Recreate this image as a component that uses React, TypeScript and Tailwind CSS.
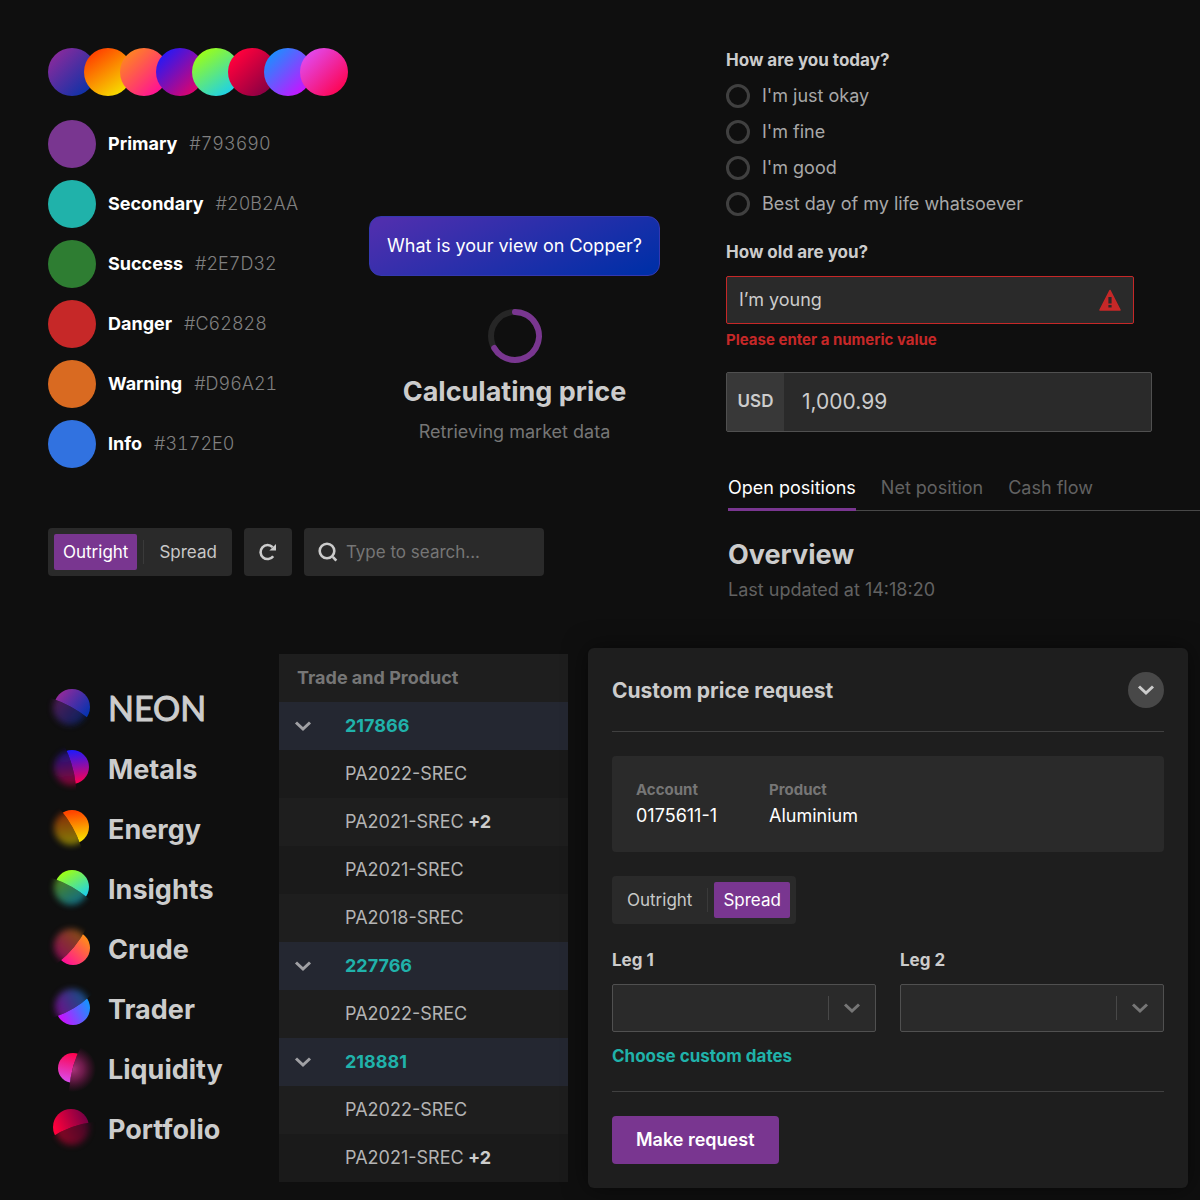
import { useState } from "react";

interface Brand {
  id: string;
  label: string;
  from: string;
  to: string;
  // gradient direction, x1 y1 x2 y2 in the 48px box
  dir: [number, number, number, number];
  cx: number;
  cy: number;
  r: number;
  softX: number;
  softY: number;
  sharp: string;
  soft: string;
}

const gradients = [
  "bg-linear-[135deg,#8f2a9c_8%,#0033a8_95%]",
  "bg-linear-[145deg,#ff4500_15%,#f5ee00_95%]",
  "bg-linear-[135deg,#ff8c1a_8%,#ff0a9c_90%]",
  "bg-linear-[135deg,#1a1aff_8%,#f5005a_95%]",
  "bg-linear-[145deg,#a0ff10_10%,#10ccff_95%]",
  "bg-linear-[135deg,#ff003c_15%,#7a0044_95%]",
  "bg-linear-[135deg,#1a90ff_12%,#cc10ff_88%]",
  "bg-linear-[135deg,#e14af0_12%,#ff0048_92%]",
];

const palette = [
  { name: "Primary", hex: "#793690", color: "bg-[#793690]" },
  { name: "Secondary", hex: "#20B2AA", color: "bg-[#20b2aa]" },
  { name: "Success", hex: "#2E7D32", color: "bg-[#2e7d32]" },
  { name: "Danger", hex: "#C62828", color: "bg-[#c62828]" },
  { name: "Warning", hex: "#D96A21", color: "bg-[#d96a21]" },
  { name: "Info", hex: "#3172E0", color: "bg-[#3172e0]" },
];

const moods = ["I'm just okay", "I'm fine", "I'm good", "Best day of my life whatsoever"];

const tabs = ["Open positions", "Net position", "Cash flow"];

const brands: Brand[] = [
  {
    id: "neon", label: "NEON", from: "#8f2a9c", to: "#0033b0", dir: [12, 10, 40, 32],
    cx: 24, cy: 23, r: 18, softX: 22, softY: 24,
    sharp: "M-20 6 L3 14 Q23 21 40 34 L60 48 V-20 H-20Z",
    soft: "M-20 6 L3 14 Q23 21 40 34 L60 48 V70 H-20Z",
  },
  {
    id: "metals", label: "Metals", from: "#1a1aff", to: "#ff0050", dir: [22, 6, 26, 40],
    cx: 24, cy: 23, r: 17, softX: 23, softY: 24,
    sharp: "M12 -10 L17 3 Q26 22 28 42 L29 60 H70 V-10Z",
    soft: "M12 -10 L17 3 Q26 22 28 42 L29 60 H-20 V-10Z",
  },
  {
    id: "energy", label: "Energy", from: "#ff4500", to: "#f7f000", dir: [24, 8, 28, 40],
    cx: 24, cy: 23, r: 17, softX: 23, softY: 24,
    sharp: "M4 -10 L12 5 Q26 22 33 42 L38 60 H70 V-10Z",
    soft: "M4 -10 L12 5 Q26 22 33 42 L38 60 H-20 V-10Z",
  },
  {
    id: "insights", label: "Insights", from: "#a0ff10", to: "#10ccff", dir: [18, 6, 36, 36],
    cx: 24, cy: 23, r: 17, softX: 23, softY: 24,
    sharp: "M-20 5 L4 14 Q24 21 40 34 L60 52 V-20 H-20Z",
    soft: "M-20 5 L4 14 Q24 21 40 34 L60 52 V70 H-20Z",
  },
  {
    id: "crude", label: "Crude", from: "#ff8c1a", to: "#ff0a9c", dir: [38, 14, 14, 38],
    cx: 25, cy: 24, r: 17, softX: 23, softY: 22,
    sharp: "M46 -14 L38 5 Q28 24 11 38 L-10 55 V70 H70 V-14Z",
    soft: "M46 -14 L38 5 Q28 24 11 38 L-10 55 V-14Z",
  },
  {
    id: "trader", label: "Trader", from: "#1a90ff", to: "#cc10ff", dir: [40, 20, 12, 34],
    cx: 25, cy: 24, r: 17, softX: 24, softY: 22,
    sharp: "M60 -4 L42 12 Q27 26 7 33 L-20 40 V70 H70Z",
    soft: "M60 -4 L42 12 Q27 26 7 33 L-20 40 V-20 H60Z",
  },
  {
    id: "liquidity", label: "Liquidity", from: "#ff0048", to: "#d850f5", dir: [28, 9, 21, 40],
    cx: 25, cy: 24, r: 15, softX: 27, softY: 24,
    sharp: "M42 -14 L34 1 Q23 20 21 47 V70 H-20 V-14Z",
    soft: "M42 -14 L34 1 Q23 20 21 47 V70 H70 V-14Z",
  },
  {
    id: "portfolio", label: "Portfolio", from: "#ff003c", to: "#7a0044", dir: [8, 27, 38, 14],
    cx: 23, cy: 23, r: 18, softX: 24, softY: 24,
    sharp: "M-20 46 L4 33 Q22 21 45 18 L70 16 V-20 H-20Z",
    soft: "M-20 46 L4 33 Q22 21 45 18 L70 16 V70 H-20Z",
  },
];

interface TradeRow {
  label: string;
  extra?: string;
  group?: boolean;
}

const trades: TradeRow[] = [
  { label: "217866", group: true },
  { label: "PA2022-SREC" },
  { label: "PA2021-SREC", extra: "+2" },
  { label: "PA2021-SREC" },
  { label: "PA2018-SREC" },
  { label: "227766", group: true },
  { label: "PA2022-SREC" },
  { label: "218881", group: true },
  { label: "PA2022-SREC" },
  { label: "PA2021-SREC", extra: "+2" },
];

function Chevron({ className = "" }: { className?: string }) {
  return (
    <svg viewBox="0 0 18 12" fill="none" className={`h-3 w-[18px] ${className}`} aria-hidden="true">
      <path d="M2 2.5 L9 9 L16 2.5" stroke="currentColor" strokeWidth="3" />
    </svg>
  );
}

function BrandIcon({ brand }: { brand: Brand }) {
  const [x1, y1, x2, y2] = brand.dir;
  return (
    <svg viewBox="0 0 48 48" className="size-12 shrink-0 overflow-visible" aria-hidden="true">
      <defs>
        <linearGradient id={`${brand.id}-fill`} gradientUnits="userSpaceOnUse" x1={x1} y1={y1} x2={x2} y2={y2}>
          <stop stopColor={brand.from} />
          <stop offset="1" stopColor={brand.to} />
        </linearGradient>
        {/* the glow of the liquidity mark fades outwards from its cut edge */}
        <radialGradient id={`${brand.id}-glow`} gradientUnits="userSpaceOnUse" cx="25" cy="25" r="23">
          <stop stopColor="#e040a0" stopOpacity="1.4" />
          <stop offset="0.45" stopColor="#c02880" stopOpacity="0.7" />
          <stop offset="1" stopColor="#a01060" stopOpacity="0" />
        </radialGradient>
        <clipPath id={`${brand.id}-sharp`}>
          <path d={brand.sharp} />
        </clipPath>
        <clipPath id={`${brand.id}-soft`}>
          <path d={brand.soft} />
        </clipPath>
        <filter id={`${brand.id}-blur`} x="-50%" y="-50%" width="200%" height="200%">
          <feGaussianBlur stdDeviation="3" />
        </filter>
      </defs>
      {brand.id === "liquidity" ? (
        <g clipPath={`url(#${brand.id}-soft)`} opacity="0.75">
          <circle cx="25" cy="25" r="23" fill={`url(#${brand.id}-glow)`} />
        </g>
      ) : (
        <g clipPath={`url(#${brand.id}-soft)`} opacity="0.5">
          <circle cx={brand.softX} cy={brand.softY} r="17" fill={`url(#${brand.id}-fill)`} filter={`url(#${brand.id}-blur)`} />
        </g>
      )}
      <g clipPath={`url(#${brand.id}-sharp)`}>
        <circle cx={brand.cx} cy={brand.cy} r={brand.r} fill={`url(#${brand.id}-fill)`} />
      </g>
    </svg>
  );
}

function Segmented({ initial }: { initial: string }) {
  const [value, setValue] = useState(initial);
  const item = (name: string) => (
    <button
      type="button"
      onClick={() => setValue(name)}
      className={`h-9 rounded-xs px-[9px] pt-px ${value === name ? "bg-[#793690] text-white" : "text-[#c8c8c8]"}`}
    >
      {name}
    </button>
  );
  return (
    <div className="flex h-12 w-fit items-center gap-1.5 rounded bg-[#2a2a2a] p-1.5 text-[17px]">
      {item("Outright")}
      <span className="h-6 w-px bg-[#3a3a3a]" />
      {item("Spread")}
    </div>
  );
}

function LegSelect({ id, label }: { id: string; label: string }) {
  return (
    <div className="flex-1">
      <label htmlFor={id} className="block text-[17px] leading-6 font-bold">
        {label}
      </label>
      <div className="relative mt-3">
        <select id={id} className="block h-12 w-full appearance-none rounded-xs border border-[#505050] bg-[#2a2a2a] px-3" />
        <span className="pointer-events-none absolute inset-y-0 right-0 flex items-center gap-3.5 pr-[15px] text-[#767676]">
          <span className="h-6 w-px bg-[#484848]" />
          <Chevron />
        </span>
      </div>
    </div>
  );
}

export default function App() {
  const [tab, setTab] = useState("Open positions");

  return (
    <div className="min-h-screen bg-[#0f0f0f] pb-3 font-['Inter',sans-serif] text-[#cccccc]">
      <div className="flex h-[648px] pt-12">
        <div className="w-[726px] shrink-0 pl-12">
          <div className="flex">
            {gradients.map((gradient) => (
              <span key={gradient} className={`-mr-3 size-12 rounded-full ${gradient}`} />
            ))}
          </div>

          <div className="mt-6 flex">
            <ul className="w-[321px] space-y-3">
              {palette.map((color) => (
                <li key={color.name} className="flex items-center gap-3 text-lg">
                  <span className={`size-12 rounded-full ${color.color}`} />
                  <span className="font-bold text-white">{color.name}</span>
                  <span className="font-light text-[#808080] tabular-nums">{color.hex}</span>
                </li>
              ))}
            </ul>

            <div className="flex w-[291px] flex-col items-center pt-24">
              <button
                type="button"
                className="h-15 w-full rounded-xl border border-[#3438b0] bg-linear-[155deg,#4f2fae_5%,#002fa7_95%] text-lg text-white"
              >
                What is your view on Copper?
              </button>
              <svg viewBox="0 0 54 54" fill="none" className="mt-[33px] size-[54px]" aria-hidden="true">
                <circle cx="27" cy="27" r="24" stroke="#262626" strokeWidth="6" />
                <path d="M27 3 A24 24 0 1 1 6.2 39" stroke="#793690" strokeWidth="6" strokeLinecap="round" />
              </svg>
              <h2 className="mt-[13px] text-[27px] leading-8 font-bold">Calculating price</h2>
              <p className="mt-3 text-lg leading-6 text-[#767676]">Retrieving market data</p>
            </div>
          </div>

          <div className="mt-15 flex gap-3">
            <Segmented initial="Outright" />
            <button type="button" aria-label="Refresh" className="flex size-12 items-center justify-center rounded bg-[#2a2a2a]">
              <svg viewBox="0 0 18 18" fill="none" className="size-[18px]" aria-hidden="true">
                <path d="M14.2 13.2 A7 7 0 1 1 13.6 4.2" stroke="#cccccc" strokeWidth="2.6" />
                <path d="M17 1 V7.6 H10.4Z" fill="#cccccc" />
              </svg>
            </button>
            <div className="flex h-12 w-60 items-center gap-2 rounded bg-[#2a2a2a] px-3.5">
              <svg viewBox="0 0 20 20" fill="none" className="size-5 shrink-0" aria-hidden="true">
                <circle cx="9" cy="9" r="7.3" stroke="#cccccc" strokeWidth="2.6" />
                <path d="M14.8 14.8 L18.3 18.6" stroke="#cccccc" strokeWidth="2.6" />
              </svg>
              <input
                type="search"
                aria-label="Search"
                placeholder="Type to search..."
                className="w-full min-w-0 bg-transparent pt-px text-[17px] outline-none placeholder:text-[#767676]"
              />
            </div>
          </div>
        </div>

        <div className="min-w-0 flex-1">
          <fieldset>
            <legend className="text-[17px] leading-6 font-bold">How are you today?</legend>
            <div className="mt-3 space-y-3">
              {moods.map((mood) => (
                <label key={mood} className="flex items-center gap-3 text-lg leading-6 text-[#a8a8a8]">
                  <input
                    type="radio"
                    name="mood"
                    className="size-6 appearance-none rounded-full border-3 border-[#404040] checked:border-[#793690]"
                  />
                  {mood}
                </label>
              ))}
            </div>
          </fieldset>

          <div className="mt-6 mr-[66px]">
            <label htmlFor="age" className="block text-[17px] leading-6 font-bold">
              How old are you?
            </label>
            <div className="mt-3 flex h-12 items-center rounded-xs border border-[#c62828] bg-[#2a2a2a] px-3">
              <input id="age" defaultValue="I’m young" className="min-w-0 flex-1 bg-transparent text-lg outline-none" />
              <svg viewBox="0 0 22 22" className="size-[22px]" aria-hidden="true">
                <path d="M11 1.5 L21 21 H1Z" fill="#c62828" stroke="#c62828" strokeWidth="1.6" strokeLinejoin="round" />
                <path d="M9.4 8 H12.6 V14.5 H9.4Z M9.4 16 H12.6 V18.6 H9.4Z" fill="#2a2a2a" />
              </svg>
            </div>
            <p className="mt-1 text-[15px] leading-6 font-bold text-[#c62828]">Please enter a numeric value</p>
          </div>

          <div className="mt-5 mr-12 flex h-15 rounded-xs border border-[#505050] bg-[#2a2a2a]">
            <label htmlFor="amount" className="flex w-[57px] items-center justify-center bg-[#383838] text-[17px] font-semibold">
              USD
            </label>
            <input id="amount" defaultValue="1,000.99" className="min-w-0 flex-1 bg-transparent px-[18px] text-[21px] outline-none" />
          </div>

          <div className="pl-0.5">
            <div role="tablist" className="mt-[35px] flex gap-[25px] border-b border-[#484848]">
              {tabs.map((name) => (
                <button
                  key={name}
                  type="button"
                  role="tab"
                  aria-selected={tab === name}
                  onClick={() => setTab(name)}
                  className={`-mb-px h-11 border-b-3 text-lg leading-6 ${
                    tab === name ? "border-[#793690] text-white" : "border-transparent text-[#626262]"
                  }`}
                >
                  {name}
                </button>
              ))}
            </div>
            <h2 className="mt-7 text-[27px] leading-8 font-bold">Overview</h2>
            <p className="mt-[7px] text-lg leading-6 text-[#626262]">Last updated at 14:18:20</p>
          </div>
        </div>
      </div>

      <div className="flex">
        <ul className="w-[279px] shrink-0 space-y-3 pt-9 pl-12">
          {brands.map((brand) => (
            <li key={brand.id} className="flex h-12 items-center gap-3">
              <BrandIcon brand={brand} />
              {brand.id === "neon" ? (
                <span className="font-['Lato',sans-serif] text-[34px] leading-8 [-webkit-text-stroke:1px]">{brand.label}</span>
              ) : (
                <span className="pt-[3px] text-[27px] leading-8 font-bold">{brand.label}</span>
              )}
            </li>
          ))}
        </ul>

        <table className="mt-1.5 w-[289px] shrink-0 self-start text-left text-lg leading-6">
          <thead>
            <tr className="h-12 bg-[#1e1e1e]">
              <th colSpan={2} className="pl-[18px] font-bold text-[#767676]">
                Trade and Product
              </th>
            </tr>
          </thead>
          <tbody>
            {trades.map((row, i) => (
              <tr key={i} className={`h-12 ${row.group ? "bg-[#242731]" : i % 2 ? "bg-[#1a1a1a]" : "bg-[#1e1e1e]"}`}>
                <td className="w-[66px] pl-[15px] text-[#a0a0a4]">{row.group && <Chevron />}</td>
                <td className={row.group ? "font-bold text-[#20b2aa]" : "text-[#b4b4b4]"}>
                  {row.label}
                  {row.extra && <b className="font-bold text-[#cccccc]"> {row.extra}</b>}
                </td>
              </tr>
            ))}
          </tbody>
        </table>

        <section className="mr-3 ml-5 min-w-0 flex-1 rounded-md bg-[#1e1e1e] p-6 shadow-[0_0_24px_rgba(0,0,0,0.5)]">
          <div className="flex items-center justify-between border-b border-[#404040] pb-[23px]">
            <h2 className="pt-0.5 text-[21px] leading-6 font-bold">Custom price request</h2>
            <button type="button" aria-label="Collapse" className="flex size-9 items-center justify-center rounded-full bg-[#484848]">
              <Chevron />
            </button>
          </div>

          <dl className="mt-6 flex gap-[52px] rounded bg-[#2a2a2a] px-6 py-[22px]">
            <div>
              <dt className="text-[15px] leading-6 font-bold text-[#767676]">Account</dt>
              <dd className="text-lg leading-7 text-white">0175611-1</dd>
            </div>
            <div>
              <dt className="text-[15px] leading-6 font-bold text-[#767676]">Product</dt>
              <dd className="text-lg leading-7 text-white">Aluminium</dd>
            </div>
          </dl>

          <div className="mt-6">
            <Segmented initial="Spread" />
          </div>

          <div className="mt-6 flex gap-6">
            <LegSelect id="leg-1" label="Leg 1" />
            <LegSelect id="leg-2" label="Leg 2" />
          </div>

          <a href="#dates" className="mt-3 block w-fit text-[17px] leading-6 font-bold text-[#20b2aa]">
            Choose custom dates
          </a>

          <div className="mt-[23px] border-t border-[#404040] pt-6">
            <button type="button" className="h-12 rounded bg-[#793690] px-6 text-lg font-semibold text-white">
              Make request
            </button>
          </div>
        </section>
      </div>
    </div>
  );
}
